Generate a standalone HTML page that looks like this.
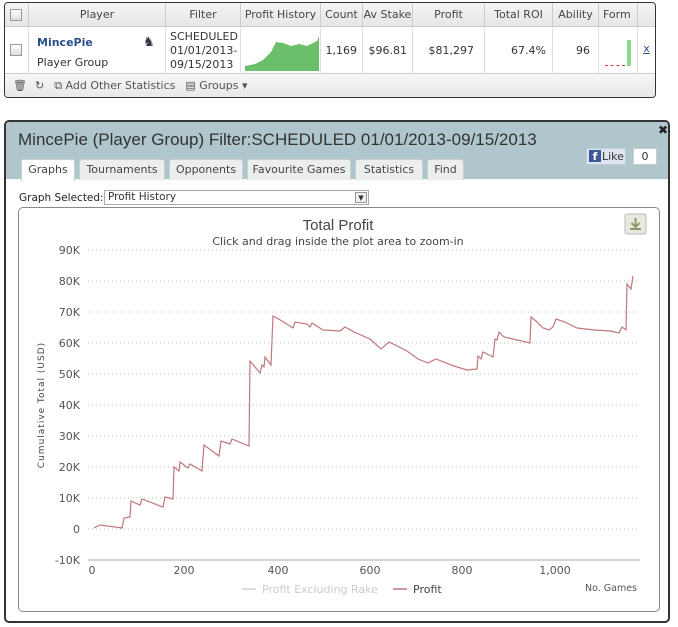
<!DOCTYPE html><html><head><style>
*{margin:0;padding:0;box-sizing:border-box}
body{width:678px;height:627px;background:#fff;font-family:"DejaVu Sans","Liberation Sans",sans-serif;font-size:11px;color:#333;position:relative;overflow:hidden}
.a{position:absolute}
.top{left:4px;top:2px;width:652px;height:96px;border:1px solid #333;border-radius:4px;overflow:hidden}
.hd{left:0;top:0;width:650px;height:24px;background:linear-gradient(#f4f4f4,#e6e6e6);border-bottom:1px solid #ccc}
.c{position:absolute;top:0;height:24px;line-height:24px;text-align:center;border-right:1px solid #ccc;color:#444}
.r{position:absolute;top:25px;height:45px;border-right:1px solid #ddd;line-height:45px;text-align:right;padding-right:5px}
.cb{width:12px;height:12px;border:1px solid #999;background:linear-gradient(#fff,#ddd)}
.ft{left:0;top:70px;width:650px;height:25px;background:linear-gradient(#f6f6f6,#e8e8e8);border-top:1px solid #ccc;color:#555;line-height:24px}
.dlg{left:4px;top:120px;width:666px;height:503px;border:2px solid #333;border-radius:5px;overflow:hidden;background:#fff}
.dh{left:0;top:0;width:662px;height:57px;background:#aec6cc}
.tab{position:absolute;top:37px;height:21px;background:#eceeee;border:1px solid #c8cfd0;border-bottom:none;border-radius:3px 3px 0 0;line-height:20px;text-align:center;color:#444;font-size:11px}
</style></head><body>
<div class="a top">
 <div class="a hd"></div>
 <div class="c" style="left:0;width:24px"><div class="cb" style="margin:6px 5px"></div></div>
 <div class="c" style="left:24px;width:137px">Player</div>
 <div class="c" style="left:161px;width:75px">Filter</div>
 <div class="c" style="left:236px;width:80px">Profit History</div>
 <div class="c" style="left:316px;width:42px">Count</div>
 <div class="c" style="left:358px;width:50px">Av Stake</div>
 <div class="c" style="left:408px;width:72px">Profit</div>
 <div class="c" style="left:480px;width:68px">Total ROI</div>
 <div class="c" style="left:548px;width:46px">Ability</div>
 <div class="c" style="left:594px;width:39px;text-align:left;padding-left:4px">Form</div>
 <div class="r" style="left:0;width:24px"><div class="cb" style="position:absolute;left:5px;top:16px"></div></div>
 <div class="r" style="left:24px;width:137px;text-align:left;line-height:18px;padding:6px 0 0 8px"><b style="color:#2b4f8a">MincePie</b><br><span style="line-height:22px">Player Group</span><span class="a" style="left:114px;top:6px;font-size:13px;color:#334">&#9822;</span></div>
 <div class="r" style="left:161px;width:75px;text-align:left;line-height:14px;padding:2px 0 0 4px;overflow:hidden;white-space:nowrap">SCHEDULED<br>01/01/2013-<br>09/15/2013</div>
 <div class="r" style="left:236px;width:80px;padding:0"><svg class="a" style="left:0;top:0" width="79" height="45"><polygon fill="#6bbf6b" points="4,43 4,38 14,36 22,32 30,24 35,14 42,15 50,18 58,16 66,18 72,15 76,13 78,8 78,43" /></svg></div>
 <div class="r" style="left:316px;width:42px">1,169</div>
 <div class="r" style="left:358px;width:50px">$96.81</div>
 <div class="r" style="left:408px;width:72px;padding-right:10px">$81,297</div>
 <div class="r" style="left:480px;width:68px;padding-right:6px">67.4%</div>
 <div class="r" style="left:548px;width:46px;padding-right:8px">96</div>
 <div class="r" style="left:594px;width:39px;padding:0"><div class="a" style="left:28px;top:12px;width:4px;height:26px;background:#8fd98f"></div><div class="a" style="left:6px;top:37px;width:20px;border-top:1px dashed #c44"></div></div>
 <div class="r" style="left:633px;width:17px;border:none;color:#2b4f8a;text-decoration:underline;text-align:center;padding:0;line-height:42px">x</div>
 <div class="a ft"><span style="margin-left:8px">&#128465;</span><span style="margin-left:8px">&#8635;</span><span style="margin-left:10px">&#10697; Add Other Statistics</span><span style="margin-left:10px">&#9636; Groups &#9662;</span></div>
</div>

<div class="a dlg">
 <div class="a dh"></div>
 <div class="a" style="left:12px;top:8px;font-family:'Liberation Sans',sans-serif;font-size:17px;color:#333">MincePie (Player Group) Filter:SCHEDULED 01/01/2013-09/15/2013</div>
 <div class="a" style="left:652px;top:1px;font-size:12px;font-weight:bold;color:#222">&#10006;</div>
 <div class="a" style="left:580px;top:26px;width:40px;height:17px;background:#dfe5ef;border:1px solid #c3cbd8;border-radius:2px;font-size:11px;line-height:15px;color:#333"><span style="display:inline-block;width:12px;height:12px;background:#3b5998;color:#fff;font-weight:bold;text-align:center;line-height:13px;margin:1px 1px 0 2px;vertical-align:top">f</span>Like</div>
 <div class="a" style="left:627px;top:26px;width:24px;height:17px;background:#fff;border:1px solid #ccc;text-align:center;line-height:15px">0</div>
 <div class="tab" style="left:15px;width:54px;background:#fff;height:22px">Graphs</div>
 <div class="tab" style="left:73px;width:86px">Tournaments</div>
 <div class="tab" style="left:163px;width:74px">Opponents</div>
 <div class="tab" style="left:241px;width:104px">Favourite Games</div>
 <div class="tab" style="left:349px;width:68px">Statistics</div>
 <div class="tab" style="left:421px;width:37px">Find</div>
 <div class="a" style="left:13px;top:70px;font-size:10.5px;color:#222">Graph Selected:</div>
 <div class="a" style="left:98px;top:68px;width:265px;height:15px;border:1px solid #aaa;font-size:10.5px;line-height:13px;padding-left:3px">Profit History<span class="a" style="right:1px;top:1px;width:12px;height:11px;border:1px solid #999;background:#eee;font-size:7px;text-align:center;line-height:11px">&#9660;</span></div>
 <div class="a" style="left:12px;top:85px;width:642px;height:405px;border:1px solid #888;border-radius:5px"></div>
</div>

<svg class="a" style="left:0;top:0" width="678" height="627" font-family="DejaVu Sans, Liberation Sans, sans-serif">
 <text x="338" y="230" text-anchor="middle" font-size="15" fill="#444" font-family="Liberation Sans,sans-serif">Total Profit</text>
 <text x="338" y="245" text-anchor="middle" font-size="11" fill="#444">Click and drag inside the plot area to zoom-in</text>
 <rect x="625" y="214" width="21" height="20" rx="2" fill="#e8e8e0" stroke="#bbb"/>
 <path d="M635.5 218v9M631.5 223l4 4 4-4M630 229h11" stroke="#8a9a6a" stroke-width="2" fill="none"/>
 <g stroke="#bbb" stroke-dasharray="1,3">
  <line x1="88" x2="640" y1="250" y2="250"/><line x1="88" x2="640" y1="281" y2="281"/><line x1="88" x2="640" y1="312" y2="312"/><line x1="88" x2="640" y1="343" y2="343"/><line x1="88" x2="640" y1="374" y2="374"/><line x1="88" x2="640" y1="405" y2="405"/><line x1="88" x2="640" y1="436" y2="436"/><line x1="88" x2="640" y1="467" y2="467"/><line x1="88" x2="640" y1="498" y2="498"/><line x1="88" x2="640" y1="529" y2="529"/>
 </g>
 <line x1="88" x2="640" y1="560" y2="560" stroke="#aab"/>
 <g font-size="11" fill="#555" text-anchor="end">
  <text x="80" y="254">90K</text><text x="80" y="285">80K</text><text x="80" y="316">70K</text><text x="80" y="347">60K</text><text x="80" y="378">50K</text><text x="80" y="409">40K</text><text x="80" y="440">30K</text><text x="80" y="471">20K</text><text x="80" y="502">10K</text><text x="80" y="533">0</text><text x="80" y="564">-10K</text>
 </g>
 <g font-size="11" fill="#555" text-anchor="middle">
  <text x="92" y="574">0</text><text x="184" y="574">200</text><text x="278" y="574">400</text><text x="370" y="574">600</text><text x="462" y="574">800</text><text x="555" y="574">1,000</text>
 </g>
 <text transform="translate(44,405) rotate(-90)" text-anchor="middle" font-size="9" fill="#444" letter-spacing="1">Cumulative Total (USD)</text>
 <text x="637" y="591" text-anchor="end" font-size="9.5" fill="#555">No. Games</text>
 <line x1="242" x2="256" y1="589" y2="589" stroke="#ddd" stroke-width="2"/>
 <text x="262" y="593" font-size="11" fill="#ccc">Profit Excluding Rake</text>
 <line x1="393" x2="407" y1="589" y2="589" stroke="#c99" stroke-width="2"/>
 <text x="413" y="593" font-size="11" fill="#444">Profit</text>
 <polyline fill="none" stroke="#c0777c" stroke-width="1.2" points="94,528 98,526 100,525 122,528 124,518 130,517 131,501 140,505 142,499 163,507 165,497 173,499 174,467 179,471 180,462 188,468 190,464 202,471 204,445 219,456 221,441 230,444 232,439 249,446 250,361 260,373 262,365 264,367 265,357 271,365 273,316 282,321 293,328 295,322 307,324 310,327 312,323 323,330 340,331 345,327 354,332 370,339 381,349 389,342 407,351 418,359 428,363 436,359 454,366 467,370 477,369 478,356 481,359 483,352 493,357 495,339 497,340 499,332 504,337 530,343 531,317 536,321 543,328 549,330 553,327 556,319 565,322 577,328 594,330 610,331 619,333 622,327 626,330 627,284 631,289 633,276"/>
</svg>
</body></html>
